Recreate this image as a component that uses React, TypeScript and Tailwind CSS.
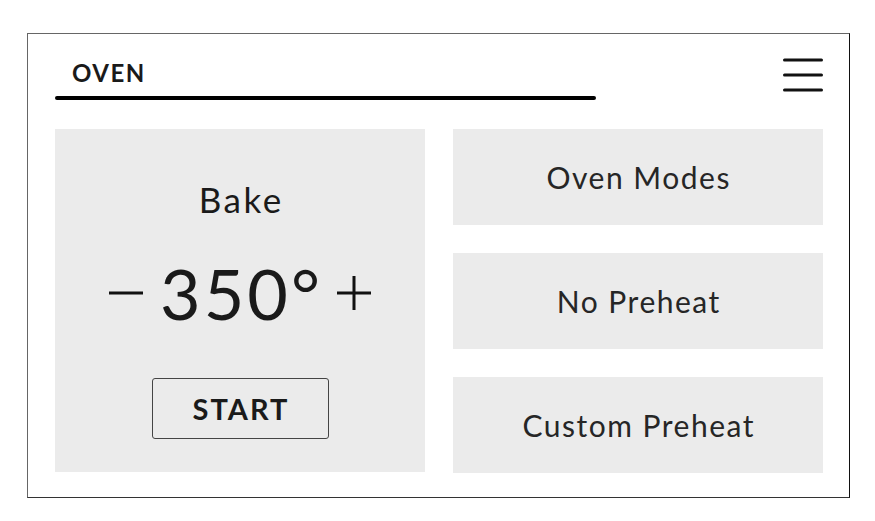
import React from 'react'

const font = { fontFamily: 'Lato, "Liberation Sans", sans-serif' }

const Minus = () => (
  <svg width="34" height="34" viewBox="0 0 34 34" className="shrink-0">
    <path d="M0 17h34" stroke="#111" strokeWidth="3" />
  </svg>
)

const Plus = () => (
  <svg width="34" height="34" viewBox="0 0 34 34" className="shrink-0">
    <path d="M0 17h34M17 0v34" stroke="#111" strokeWidth="3" />
  </svg>
)

const Menu = () => (
  <svg width="40" height="34" viewBox="0 0 40 34">
    <path d="M1.5 2h37M1.5 17h37M1.5 32h37" stroke="#111" strokeWidth="3" strokeLinecap="round" />
  </svg>
)

const ModeButton = ({ label }: { label: string }) => (
  <button className="h-[96px] w-full bg-[#ebebeb] text-[30px] leading-none tracking-[1.5px] pl-[1.5px] text-[#262626] flex items-center justify-center">
    {label}
  </button>
)

export default function App() {
  return (
    <div className="w-[875px] h-[521px] bg-white pt-[33px] pl-[27px]" style={font}>
      <div className="w-[823px] h-[465px] border border-[#666] border-r-[#111] border-b-[#333] flex flex-col pl-[27px] pr-[26px]">
        <header className="h-[95px] flex justify-between">
          <div className="pt-[27px]">
            <div className="pl-[17px] text-[24px] leading-none font-bold tracking-[1.5px] text-[#1a1a1a]">OVEN</div>
            <div className="mt-[11px] w-[541px] h-[4px] rounded-full bg-black" />
          </div>
          <div className="pt-[24px]">
            <Menu />
          </div>
        </header>

        <div className="grid grid-cols-2 gap-[28px]">
          <div className="h-[343px] bg-[#ebebeb] flex flex-col items-center pt-[53px] text-[#1a1a1a]">
            <div className="text-[35px] leading-none tracking-[2.5px] pl-[2.5px]">Bake</div>
            <div className="mt-[41px] flex items-center gap-[17px]">
              <Minus />
              <span className="text-[70px] leading-none tracking-[3px] -mr-[3px]">350°</span>
              <Plus />
            </div>
            <button className="mt-[50px] w-[177px] h-[61px] border border-[#444] rounded-[3px] text-[29px] font-bold leading-none tracking-[2px] pl-[2px] text-[#1a1a1a] flex items-center justify-center">
              START
            </button>
          </div>

          <div className="flex flex-col gap-[28px]">
            <ModeButton label="Oven Modes" />
            <ModeButton label="No Preheat" />
            <ModeButton label="Custom Preheat" />
          </div>
        </div>
      </div>
    </div>
  )
}
